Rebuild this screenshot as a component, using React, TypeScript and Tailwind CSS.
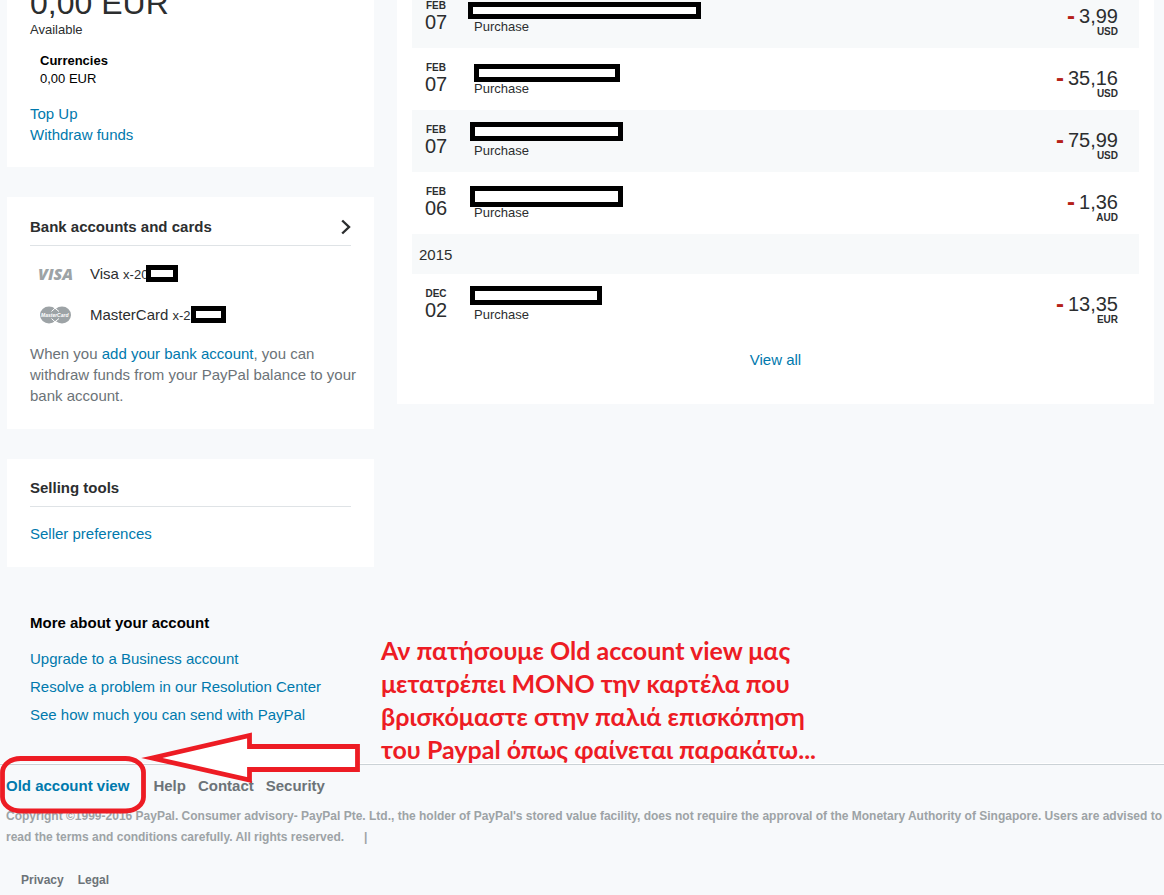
import type { ReactNode } from "react";
import clsx from "clsx";

interface Transaction {
  month: string;
  day: string;
  amount: string;
  currency: string;
  shaded?: boolean;
  // size and place of the black box that hides the merchant
  mask: string;
}

const TRANSACTIONS_2016: Transaction[] = [
  { month: "FEB", day: "07", amount: "3,99", currency: "USD", shaded: true, mask: "-left-1.5 top-4 h-[17px] w-[233px]" },
  { month: "FEB", day: "07", amount: "35,16", currency: "USD", mask: "left-0 top-4 h-[18px] w-[146px]" },
  { month: "FEB", day: "07", amount: "75,99", currency: "USD", shaded: true, mask: "-left-1 top-3 h-[19px] w-[153px]" },
  { month: "FEB", day: "06", amount: "1,36", currency: "AUD", mask: "-left-1 top-3.5 h-[21px] w-[153px]" },
];

const TRANSACTIONS_2015: Transaction[] = [
  { month: "DEC", day: "02", amount: "13,35", currency: "EUR", mask: "-left-1 top-3 h-[19px] w-[132px]" },
];

const ACCOUNT_LINKS = [
  "Upgrade to a Business account",
  "Resolve a problem in our Resolution Center",
  "See how much you can send with PayPal",
];

function TextLink({ children, className }: { children: ReactNode; className?: string }) {
  return (
    <a href="#" className={clsx("text-[#0079ad] hover:underline", className)}>
      {children}
    </a>
  );
}

function Mask({ className }: { className: string }) {
  return <span className={clsx("border-[5px] border-black bg-white", className)} />;
}

function CardTitle({ children, arrow }: { children: ReactNode; arrow?: boolean }) {
  return (
    <div className="flex items-center justify-between border-b border-[#dfe3e6] pb-2">
      <h2 className="font-bold text-[#2c2e2f]">{children}</h2>
      {arrow && (
        <a href="#" aria-label="Bank accounts and cards">
          <svg width="10" height="16" viewBox="0 0 10 16" fill="none" stroke="#2c2e2f" strokeWidth="2.4">
            <path d="M1.2 1.5 8 8l-6.8 6.5" />
          </svg>
        </a>
      )}
    </div>
  );
}

function VisaLogo() {
  return (
    <svg width="36" height="14" viewBox="0 0 36 14" aria-hidden="true">
      <text x="0" y="12.5" fill="#9da3a6" className="font-['Open_Sans',sans-serif] text-[16px] font-extrabold italic">
        VISA
      </text>
    </svg>
  );
}

function MasterCardLogo() {
  return (
    <svg width="36" height="18" viewBox="0 0 36 18" aria-hidden="true">
      <ellipse cx="11" cy="9" rx="9" ry="8.5" fill="#9da3a6" />
      <ellipse cx="24" cy="9" rx="9" ry="8.5" fill="#9da3a6" />
      <path d="M13.5 5.5 17 2.2l4 3.3M13.5 12.5l3.5 3.3 4-3.3" fill="none" stroke="#fff" strokeWidth="1" />
      <text x="3" y="11" fill="#fff" className="font-['Liberation_Sans',sans-serif] text-[5px] font-bold italic">
        MasterCard
      </text>
    </svg>
  );
}

function TransactionRow({ item }: { item: Transaction }) {
  return (
    <tr className={clsx("h-[62px] align-top", item.shaded && "bg-[#f7f9fa]")}>
      <td className="w-12 pt-3.5 text-center">
        <div className="text-[10px] leading-3 font-bold">{item.month}</div>
        <div className="text-xl leading-5">{item.day}</div>
      </td>
      <td className="pl-3.5">
        <div className="relative pt-8 text-[13px] leading-[18px]">
          Purchase
          <Mask className={clsx("absolute", item.mask)} />
        </div>
      </td>
      <td className="pt-5 pr-[21px] text-right">
        <div className="flex items-center justify-end gap-1 text-xl leading-5">
          <span className="text-2xl leading-5 font-bold text-[#b52218]">-</span>
          {item.amount}
        </div>
        <div className="text-[10px] leading-3 font-bold">{item.currency}</div>
      </td>
    </tr>
  );
}

function Sidebar() {
  return (
    <aside className="w-[367px] shrink-0">
      <section className="bg-white px-[23px] pb-[22px]">
        <div className="-mt-4 text-[32px] leading-[38px]">0,00 EUR</div>
        <p className="text-[13px] leading-4">Available</p>
        <div className="mt-3.5 pl-2.5 text-[13px] leading-[18px] text-black">
          <h3 className="font-bold">Currencies</h3>
          <p>0,00 EUR</p>
        </div>
        <div className="mt-[15px] flex flex-col items-start">
          <TextLink>Top Up</TextLink>
          <TextLink>Withdraw funds</TextLink>
        </div>
      </section>

      <section className="mt-[30px] bg-white px-[23px] pt-[19px] pb-[23px]">
        <CardTitle arrow>Bank accounts and cards</CardTitle>
        <ul className="mt-[17px] space-y-5">
          <li className="flex items-center pl-2">
            <VisaLogo />
            <span className="ml-4">
              Visa <span className="text-[13px] leading-none">x-20</span>
            </span>
            <Mask className="-ml-0.5 h-[17px] w-8" />
          </li>
          <li className="flex items-center pl-2">
            <MasterCardLogo />
            <span className="ml-4">
              MasterCard <span className="text-[13px] leading-none">x-2</span>
            </span>
            <Mask className="h-[17px] w-[35px]" />
          </li>
        </ul>
        <p className="mt-[18px] -mr-2.5 text-[#6c7378]">
          When you <TextLink>add your bank account</TextLink>, you can withdraw funds from your PayPal balance to your
          bank account.
        </p>
      </section>

      <section className="mt-[30px] bg-white px-[23px] pt-[18px] pb-[23px]">
        <CardTitle>Selling tools</CardTitle>
        <div className="mt-4">
          <TextLink>Seller preferences</TextLink>
        </div>
      </section>

      <section className="mt-[45px] px-[23px]">
        <h2 className="font-bold text-black">More about your account</h2>
        <ul className="mt-3 leading-7">
          {ACCOUNT_LINKS.map((label) => (
            <li key={label}>
              <TextLink>{label}</TextLink>
            </li>
          ))}
        </ul>
      </section>
    </aside>
  );
}

function Activity() {
  return (
    <section className="flex-1 bg-white px-[15px] pb-[34px]">
      <table className="-mt-3.5 w-full">
        <tbody>
          {TRANSACTIONS_2016.map((item, index) => (
            <TransactionRow key={index} item={item} />
          ))}
          <tr className="h-10 bg-[#f7f9fa]">
            <th colSpan={3} className="pl-[7px] text-left font-normal">
              2015
            </th>
          </tr>
          {TRANSACTIONS_2015.map((item, index) => (
            <TransactionRow key={index} item={item} />
          ))}
        </tbody>
      </table>
      <div className="mt-[13px] text-center">
        <TextLink>View all</TextLink>
      </div>
    </section>
  );
}

// Red note, arrow and outline that point at the "Old account view" link
function Callout() {
  return (
    <div className="pointer-events-none absolute left-0 -top-[131px]">
      <p className="absolute left-[381px] top-0 font-['Lato','Open_Sans',sans-serif] text-[25px] leading-[33px] font-bold whitespace-nowrap text-[#ed1c24]">
        Αν πατήσουμε Old account view μας
        <br />
        μετατρέπει ΜΟΝΟ την καρτέλα που
        <br />
        βρισκόμαστε στην παλιά επισκόπηση
        <br />
        του Paypal όπως φαίνεται παρακάτω...
      </p>
      <svg className="mt-24" width="362" height="86" viewBox="0 730 362 86" fill="none" stroke="#ed1c24" strokeWidth="4.8">
        <rect x="2.5" y="758.5" width="141" height="52.5" rx="18" ry="14" />
        <path d="M152 758 249.500 735.500v11H357.500v23H249.500v10.500Z" fill="#fff" strokeMiterlimit="10" />
      </svg>
    </div>
  );
}

function Footer() {
  return (
    <footer className="relative mt-[35px] border-t border-[#cbd2d6] px-1.5 pt-2.5 pb-[5px] font-bold shadow-[0_-1px_0_#fff]">
      <nav className="flex text-[#6c7378]">
        <TextLink className="mr-6">Old account view</TextLink>
        <div className="flex gap-3">
          <a href="#">Help</a>
          <a href="#">Contact</a>
          <a href="#">Security</a>
        </div>
      </nav>
      <p className="mt-2.5 -mr-1 text-xs leading-[21px] text-[#9da3a6]">
        Copyright ©1999-2016 PayPal. Consumer advisory- PayPal Pte. Ltd., the holder of PayPal's stored value facility,
        does not require the approval of the Monetary Authority of Singapore. Users are advised to read the terms and
        conditions carefully. All rights reserved.
        <span className="ml-5">|</span>
      </p>
      <nav className="mt-[22px] flex gap-3.5 pl-[15px] text-xs leading-[21px] text-[#6c7378]">
        <a href="#">Privacy</a>
        <a href="#">Legal</a>
      </nav>
      <Callout />
    </footer>
  );
}

export default function App() {
  return (
    <div className="min-h-screen overflow-hidden bg-[#f7f9fb] font-['Liberation_Sans',Arial,sans-serif] text-[15px] leading-[21px] text-[#2c2e2f]">
      <main className="flex items-start gap-[23px] pr-2.5 pl-[7px]">
        <Sidebar />
        <Activity />
      </main>
      <Footer />
    </div>
  );
}
